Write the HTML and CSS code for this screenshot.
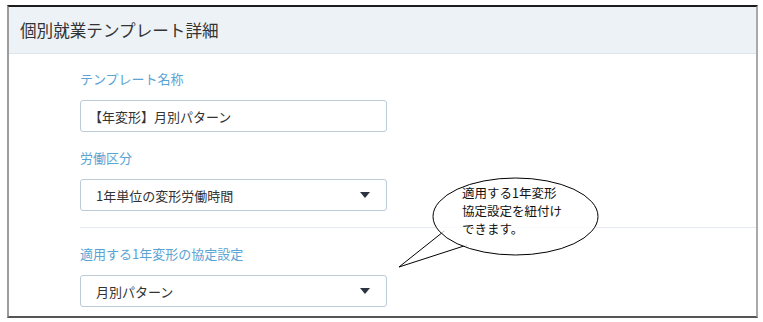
FILE: index.html
```html
<!DOCTYPE html>
<html lang="ja">
<head>
  <meta charset="UTF-8" />
  <title>個別就業テンプレート詳細</title>
  <meta name="viewport" content="width=device-width, initial-scale=1.0" />
  <link rel="stylesheet" href="styles.css">
</head>
<body>

<div class="panel">
  <div class="panel-head">
    <h1>個別就業テンプレート詳細</h1>
  </div>

  <div class="panel-body">
    <div class="field">
      <label for="tplName">テンプレート名称</label>
      <input id="tplName" type="text" value="【年変形】月別パターン" />
    </div>

    <div class="field">
      <label>労働区分</label>
      <div class="select">
        <span>1年単位の変形労働時間</span>
        <i class="caret"></i>
      </div>
    </div>

    <hr class="divider" />

    <div class="field">
      <label>適用する1年変形の協定設定</label>
      <div class="select">
        <span>月別パターン</span>
        <i class="caret"></i>
      </div>
    </div>

    <div class="callout">
      <svg class="callout-shape" width="210" height="100" viewBox="0 0 210 100">
        <path d="M47.5 53 L1 90 L69 68" fill="#fff" stroke="#000" stroke-width="1" />
        <ellipse cx="117.5" cy="39.5" rx="82.5" ry="38.5" fill="rgba(255,255,255,0.75)" stroke="#000" stroke-width="1" />
        <path d="M46 52.5 L68 68.5" stroke="rgba(255,255,255,0.9)" stroke-width="2" />
      </svg>
      <p class="callout-text">適用する1年変形<br>協定設定を紐付け<br>できます。</p>
    </div>
  </div>
</div>

</body>
</html>
```

FILE: styles.css
```css
body {
  margin: 0;
  background: #fff;
  font-family: "Noto Sans CJK JP", "Noto Sans", sans-serif;
  color: #333;
}
.panel {
  margin: 5px 0 0 7px;
  width: 751px;
  height: 313px;
  box-sizing: border-box;
  border-top: 2px solid #1c1c1c;
  border-left: 2px solid #9c9c9c;
  border-right: 2px solid #a9a9a9;
  border-bottom: 2px solid #555;
  overflow: hidden;
}
.panel-head {
  background: #edf2f6;
  height: 46px;
  border-bottom: 1px solid #dce5ec;
  display: flex;
  align-items: center;
  padding-left: 11px;
}
.panel-head h1 {
  margin: 0;
  font-size: 16.6px;
  font-weight: 400;
  color: #333;
  letter-spacing: 0;
}
.panel-body {
  position: relative;
  padding: 15px 0 0 71px;
}
.field {
  width: 307px;
  margin-bottom: 16px;
}
.field label {
  display: block;
  font-size: 13px;
  line-height: 20px;
  color: #5aa3d3;
  margin-bottom: 11px;
}
.field input, .select {
  width: 100%;
  height: 32px;
  box-sizing: border-box;
  border: 1px solid #bccbd8;
  border-radius: 3px;
  font-family: inherit;
  font-size: 13px;
  color: #333;
  background: #fff;
}
.field input {
  padding: 0 8px;
  outline: none;
}
.select {
  display: flex;
  align-items: center;
  justify-content: space-between;
  padding: 0 16px 0 15px;
}
.caret {
  width: 0;
  height: 0;
  border-left: 5px solid transparent;
  border-right: 5px solid transparent;
  border-top: 6px solid #2b3440;
}
.divider {
  border: none;
  border-top: 1px solid #e4eaef;
  margin: 0 0 16px 0;
  height: 0;
}
.callout {
  position: absolute;
  left: 389px;
  top: 123px;
  width: 210px;
  height: 100px;
}
.callout-shape {
  position: absolute;
  left: 0;
  top: 0;
}
.callout-text {
  position: absolute;
  left: 64px;
  top: 7px;
  margin: 0;
  font-size: 12.5px;
  line-height: 18px;
  color: #111;
}
```
